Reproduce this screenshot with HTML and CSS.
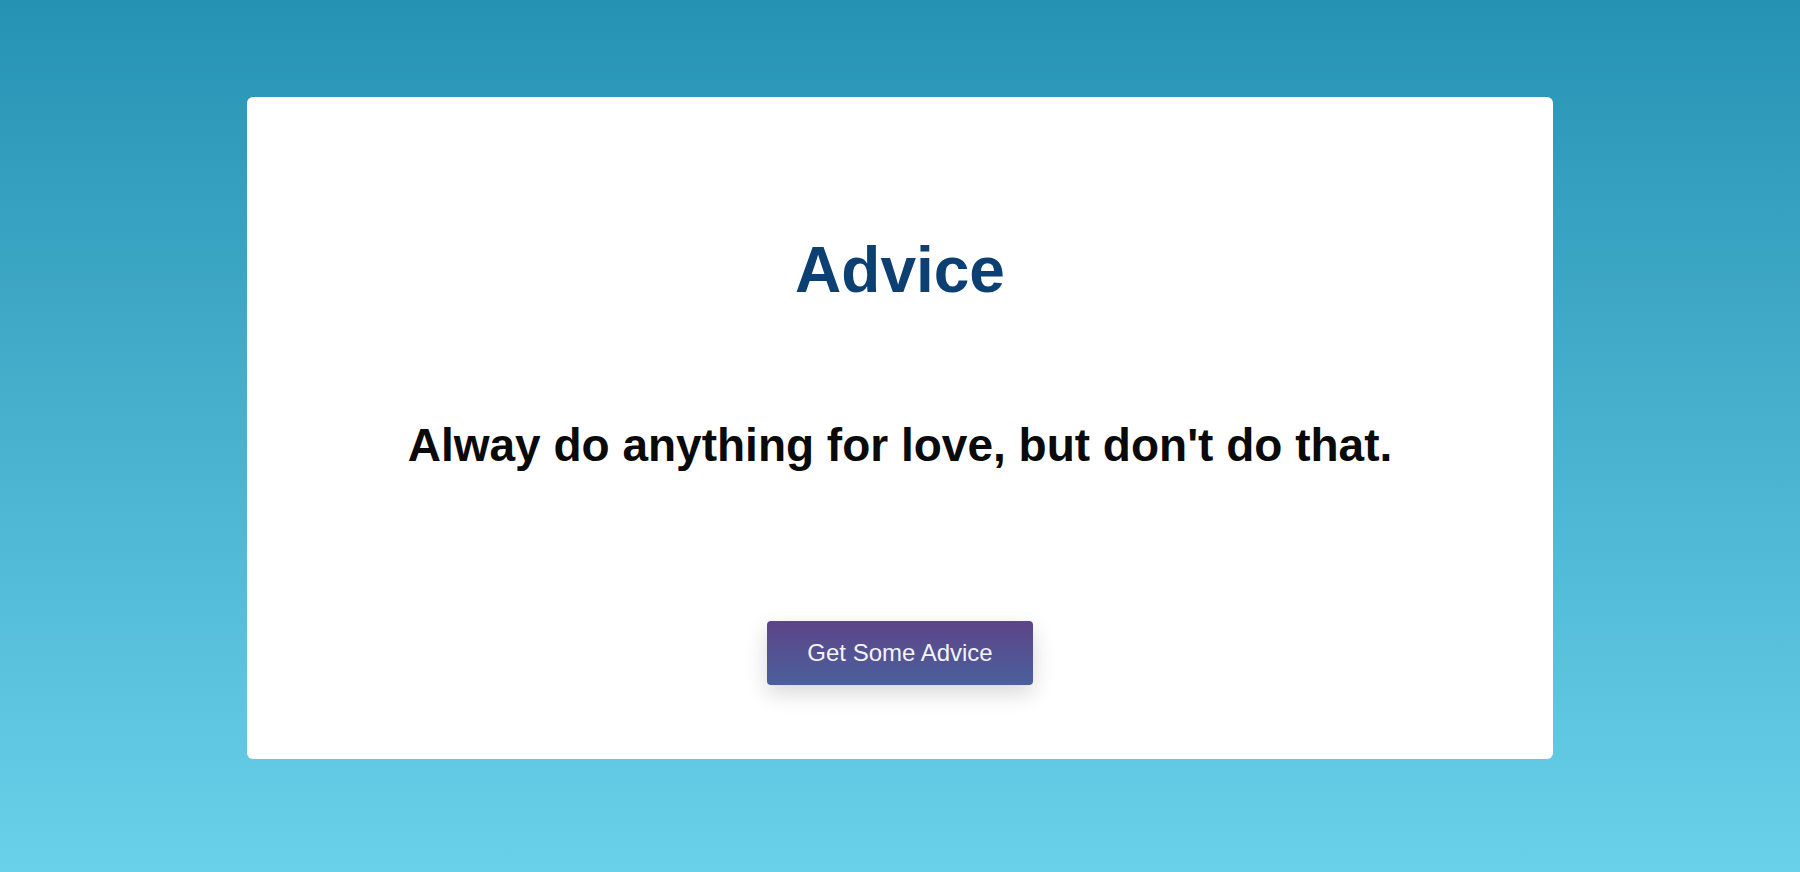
FILE: index.html
```html
<!DOCTYPE html>
<html lang="en">
<head>
<meta charset="utf-8">
<title>Advice</title>
<link rel="stylesheet" href="styles.css">
</head>
<body>
  <main class="card">
    <h1 class="title">Advice</h1>
    <p class="quote">Alway do anything for love, but don't do that.</p>
    <button class="btn" type="button">Get Some Advice</button>
  </main>
</body>
</html>
```
FILE: styles.css
```css
html, body {
  margin: 0;
  height: 100%;
}
body {
  background: linear-gradient(to bottom, #2692b3 0%, #6ad1ea 100%);
  font-family: "Liberation Sans", Arial, sans-serif;
  padding-top: 97px;
  box-sizing: border-box;
  display: flex;
  flex-direction: column;
  align-items: center;
}
.card {
  width: 1306px;
  box-sizing: border-box;
  background: #ffffff;
  border-radius: 6px;
  display: flex;
  flex-direction: column;
  align-items: center;
  padding: 135px 40px 74px;
}
.title {
  margin: 0;
  font-size: 64px;
  line-height: 1.2;
  font-weight: 700;
  color: #0c3f72;
}
.quote {
  margin: 109px 0 0;
  font-size: 46px;
  line-height: 1.2;
  font-weight: 700;
  color: #0a0a0a;
}
.btn {
  margin-top: 148px;
  font-family: "Liberation Sans", Arial, sans-serif;
  font-size: 24px;
  line-height: 28px;
  padding: 18px 40px;
  color: #f4f2fb;
  border: none;
  border-radius: 4px;
  background: linear-gradient(to bottom, #5e4488 0%, #4a609c 100%);
  box-shadow: 0 8px 22px rgba(0, 0, 0, 0.16);
  cursor: pointer;
}
```
